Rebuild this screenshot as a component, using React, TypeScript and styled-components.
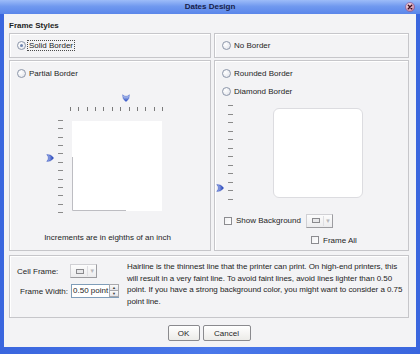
import React from 'react'
import styled, { createGlobalStyle } from 'styled-components'

const GlobalStyle = createGlobalStyle`
  html, body {
    margin: 0;
    padding: 0;
  }
  body {
    width: 420px;
    height: 354px;
    overflow: hidden;
    font-family: 'Liberation Sans', Arial, sans-serif;
    font-size: 8px;
    color: #1e1e1e;
  }
`

const Window = styled.div`
  width: 420px;
  height: 354px;
  display: flex;
  flex-direction: column;
  background: linear-gradient(90deg, #3a66de, #4a78ea 50%, #3a66de);
`

const TitleBar = styled.div`
  height: 14px;
  flex: none;
  display: grid;
  grid-template-columns: 1fr auto 1fr;
  align-items: center;
  background: linear-gradient(#9dbcf8, #7099ef 45%, #5a86ea);
  font-weight: bold;
  color: #16204a;
  line-height: 14px;
`

const TitleText = styled.div`
  grid-column: 2;
`

const CloseButton = styled.div`
  grid-column: 3;
  justify-self: end;
  margin-right: 5px;
  width: 10px;
  height: 10px;
  display: flex;
`

const Frame = styled.div`
  flex: 1;
  margin: 0 4px 7px 4px;
  padding: 0 7px 0 5px;
  background: #f3f3f5;
  display: flex;
  flex-direction: column;
`

const Heading = styled.div`
  font-weight: bold;
  height: 11px;
  line-height: 11px;
  padding-top: 6px;
  margin-bottom: 2px;
`

const StyleGrid = styled.div`
  display: grid;
  grid-template-columns: 202px 195px;
  grid-template-rows: 25px 191px;
  column-gap: 3px;
  row-gap: 2px;
`

const Panel = styled.div`
  box-sizing: border-box;
  border: 1px solid #c6c6ca;
  box-shadow: inset 1px 1px 0 #ffffff;
  background: #f3f3f5;
`

const OptionPanel = styled(Panel)`
  display: flex;
  align-items: center;
  padding-left: 7px;
`

const PreviewPanel = styled(Panel)`
  display: flex;
  flex-direction: column;
`

const RadioRow = styled.label<{ $top: number }>`
  display: flex;
  align-items: center;
  height: 11px;
  margin-top: ${p => p.$top}px;
  padding-left: 7px;
`

const RadioCircle = styled.span<{ $checked?: boolean }>`
  box-sizing: border-box;
  width: 9px;
  height: 9px;
  border-radius: 50%;
  border: 1px solid #8d97aa;
  background: radial-gradient(circle at 35% 35%, #ffffff, #dfe1e8);
  display: flex;
  align-items: center;
  justify-content: center;
  flex: none;
  &::after {
    content: '';
    display: ${p => (p.$checked ? 'block' : 'none')};
    width: 3px;
    height: 3px;
    border-radius: 50%;
    background: #7086b0;
  }
`

const OptionText = styled.span<{ $focused?: boolean }>`
  margin-left: 1px;
  padding: 0 1px;
  line-height: 9px;
  border: 1px dotted ${p => (p.$focused ? '#4a4a4a' : 'transparent')};
`

const Radio = ({ label, checked, focused, top = 0 }: { label: string; checked?: boolean; focused?: boolean; top?: number }) => (
  <RadioRow $top={top}>
    <RadioCircle $checked={checked} />
    <OptionText $focused={focused}>{label}</OptionText>
  </RadioRow>
)

const RulerGrid = styled.div`
  display: grid;
  grid-template-columns: 12px 14px 90px;
  grid-template-rows: 13px 14px 90px;
  margin: 15px 0 0 36px;
`

const HTrack = styled.div`
  grid-column: 3;
  grid-row: 1;
  position: relative;
`

const VTrack = styled.div`
  grid-column: 1;
  grid-row: 3;
  position: relative;
`

const Thumb = styled.div`
  position: absolute;
  width: 8px;
  height: 8px;
  display: flex;
`

const HTicks = styled.div`
  grid-column: 3;
  grid-row: 2;
  display: flex;
  justify-content: space-between;
  align-items: flex-start;
  margin: 0 -1px 0 -2px;
`

const HTick = styled.span`
  width: 1px;
  height: 4px;
  background: #7a7a7a;
`

const VTicks = styled.div`
  grid-column: 2;
  grid-row: 3;
  display: flex;
  flex-direction: column;
  justify-content: space-between;
  margin: -1px 0 -2px 0;
`

const VTick = styled.span`
  width: 5px;
  height: 1px;
  background: #8a8a8a;
`

const Sheet = styled.div`
  grid-column: 3;
  grid-row: 3;
  background: #ffffff;
  display: flex;
`

const RoundSheet = styled.div`
  grid-column: 3;
  grid-row: 1;
  margin-top: 3px;
  width: 90px;
  height: 90px;
  box-sizing: border-box;
  background: #ffffff;
  border: 1px solid #dcdce0;
  border-radius: 6px;
`

const Caption = styled.div`
  margin-top: 21px;
  height: 11px;
  line-height: 11px;
  text-align: center;
  padding-right: 5px;
`

const RoundGrid = styled.div`
  display: grid;
  grid-template-columns: 13px 45px 90px;
  grid-template-rows: 96px;
  margin-top: 8px;
`

const RoundTrack = styled.div`
  grid-column: 1;
  grid-row: 1;
  position: relative;
`

const RoundTicks = styled.div`
  grid-column: 2;
  grid-row: 1;
  display: flex;
  flex-direction: column;
  justify-content: space-between;
  padding: 0 0 1px 0;
`

const OptionsGrid = styled.div`
  display: grid;
  grid-template-columns: 82px auto;
  grid-template-rows: 15px 12px;
  row-gap: 6px;
  margin: 12px 0 0 9px;
  align-items: center;
`

const CheckRow = styled.label<{ $col: number; $row: number }>`
  grid-column: ${p => p.$col};
  grid-row: ${p => p.$row};
  display: flex;
  align-items: center;
  gap: 4px;
  padding-left: ${p => (p.$col === 2 ? 5 : 0)}px;
`

const CheckBox = styled.span`
  box-sizing: border-box;
  width: 8px;
  height: 8px;
  border: 1px solid #8c8c90;
  background: linear-gradient(135deg, #f0f0f2, #ffffff);
`

const ComboBox = styled.div`
  box-sizing: border-box;
  width: 27px;
  height: 14px;
  display: flex;
  align-items: center;
  padding-left: 5px;
  gap: 3px;
  border: 1px solid #d0d0d4;
  border-right-color: #9c9ca0;
  border-bottom-color: #9c9ca0;
  background: linear-gradient(#fcfcfc, #ececee);
`

const Swatch = styled.span`
  box-sizing: border-box;
  width: 8px;
  height: 5px;
  border: 1px solid #8a8a8e;
  background: #e8e8ea;
`

const ComboArrow = styled.span`
  width: 8px;
  height: 10px;
  border-left: 1px solid #dedee2;
  display: flex;
  align-items: center;
  justify-content: center;
  color: #b8b8bc;
  font-size: 6px;
`

const Combo = () => (
  <ComboBox>
    <Swatch />
    <ComboArrow>▼</ComboArrow>
  </ComboBox>
)

const BottomPanel = styled(Panel)`
  margin-top: 4px;
  height: 63px;
  display: flex;
  align-items: flex-start;
`

const FieldCol = styled.div`
  flex: none;
  width: 110px;
  padding: 8px 0 0 7px;
  display: flex;
  flex-direction: column;
  gap: 6px;
`

const FieldRow = styled.div<{ $indent: number; $gap: number }>`
  display: flex;
  align-items: center;
  padding-left: ${p => p.$indent}px;
  gap: ${p => p.$gap}px;
`

const Spinner = styled.div`
  box-sizing: border-box;
  width: 48px;
  height: 14px;
  display: flex;
  border: 1px solid #7f9db9;
  background: #ffffff;
`

const SpinText = styled.span`
  flex: 1;
  padding-left: 1px;
  line-height: 12px;
  white-space: nowrap;
`

const SpinButtons = styled.span`
  width: 9px;
  display: flex;
  flex-direction: column;
`

const SpinButton = styled.span`
  flex: 1;
  display: flex;
  align-items: center;
  justify-content: center;
  border: 1px solid #a8a8ac;
  margin: -1px -1px 0 0;
  background: linear-gradient(#fafafa, #e4e4e8);
  font-size: 4px;
  line-height: 4px;
  color: #404040;
`

const Note = styled.div`
  padding-top: 5px;
  line-height: 11.5px;
  letter-spacing: -0.05px;
`

const NoteLine = styled.div`
  white-space: nowrap;
`

const ButtonRow = styled.div`
  margin-top: 7px;
  display: flex;
  justify-content: center;
  gap: 3px;
`

const Button = styled.button<{ $width: number }>`
  box-sizing: border-box;
  width: ${p => p.$width}px;
  height: 16px;
  padding: 0;
  border: 1px solid #8a8a8e;
  border-radius: 2px;
  background: linear-gradient(#ffffff, #ecebe8);
  font-family: inherit;
  font-size: 8px;
  color: #1e1e1e;
`

const ThumbDown = () => (
  <svg width="8" height="8" viewBox="0 0 8 8">
    <defs>
      <linearGradient id="td" x1="0" y1="0" x2="0" y2="1">
        <stop offset="0" stopColor="#e4ecff" />
        <stop offset="1" stopColor="#1f44c0" />
      </linearGradient>
    </defs>
    <path d="M0.6 0.8 Q4 4 7.4 0.8 Q7.6 5.2 4 7.6 Q0.4 5.2 0.6 0.8 Z" fill="url(#td)" stroke="#3556c4" strokeWidth="0.5" />
  </svg>
)

const ThumbRight = () => (
  <svg width="8" height="8" viewBox="0 0 8 8">
    <defs>
      <linearGradient id="tr" x1="0" y1="0" x2="1" y2="0">
        <stop offset="0" stopColor="#b8c8f8" />
        <stop offset="1" stopColor="#1a3ab4" />
      </linearGradient>
    </defs>
    <path d="M0.8 0.6 Q5.2 0.4 7.6 4 Q5.2 7.6 0.8 7.4 Q4 4 0.8 0.6 Z" fill="url(#tr)" stroke="#2a48b8" strokeWidth="0.5" />
  </svg>
)

const CloseIcon = () => (
  <svg width="10" height="10" viewBox="0 0 10 10">
    <defs>
      <radialGradient id="cg" cx="0.4" cy="0.35" r="0.7">
        <stop offset="0" stopColor="#f8e4ec" />
        <stop offset="1" stopColor="#c27a98" />
      </radialGradient>
    </defs>
    <circle cx="5" cy="5" r="4.6" fill="url(#cg)" stroke="#7d5a9a" strokeWidth="0.6" />
    <path d="M3.3 3.3 L6.7 6.7 M6.7 3.3 L3.3 6.7" stroke="#3a0c1c" strokeWidth="1.4" strokeLinecap="round" />
  </svg>
)

const range = (n: number) => Array.from({ length: n }, (_, i) => i)

const hairline = [
  'Hairline is the thinnest line that the printer can print. On high-end printers, this',
  'will result in a very faint line. To avoid faint lines, avoid lines lighter than 0.50',
  'point. If you have a strong background color, you might want to consider a 0.75',
  'point line.',
]

export default function App() {
  const widthPct = 60
  const heightPct = 40
  const radiusPct = 85
  return (
    <>
      <GlobalStyle />
      <Window>
        <TitleBar>
          <TitleText>Dates Design</TitleText>
          <CloseButton>
            <CloseIcon />
          </CloseButton>
        </TitleBar>
        <Frame>
          <Heading>Frame Styles</Heading>
          <StyleGrid>
            <OptionPanel>
              <RadioCircle $checked />
              <OptionText $focused>Solid Border</OptionText>
            </OptionPanel>
            <OptionPanel>
              <RadioCircle />
              <OptionText>No Border</OptionText>
            </OptionPanel>
            <PreviewPanel>
              <Radio label="Partial Border" top={7} />
              <RulerGrid>
                <HTrack>
                  <Thumb style={{ left: `calc(${widthPct}% - 4px)`, top: 0 }}>
                    <ThumbDown />
                  </Thumb>
                </HTrack>
                <HTicks>
                  {range(12).map(i => (
                    <HTick key={i} />
                  ))}
                </HTicks>
                <VTrack>
                  <Thumb style={{ top: `calc(${heightPct}% - 3px)`, left: 0 }}>
                    <ThumbRight />
                  </Thumb>
                </VTrack>
                <VTicks>
                  {range(12).map(i => (
                    <VTick key={i} />
                  ))}
                </VTicks>
                <Sheet>
                  <svg width="90" height="90" viewBox="0 0 90 90">
                    <path d={`M0.5 ${heightPct * 0.9} V89.5 H${widthPct * 0.9}`} fill="none" stroke="#bdbdc2" strokeWidth="1" />
                  </svg>
                </Sheet>
              </RulerGrid>
              <Caption>Increments are in eighths of an inch</Caption>
            </PreviewPanel>
            <PreviewPanel>
              <Radio label="Rounded Border" top={7} />
              <Radio label="Diamond Border" top={7} />
              <RoundGrid>
                <RoundTrack>
                  <Thumb style={{ top: `calc(${radiusPct}% - 3px)`, left: 1 }}>
                    <ThumbRight />
                  </Thumb>
                </RoundTrack>
                <RoundTicks>
                  {range(12).map(i => (
                    <VTick key={i} />
                  ))}
                </RoundTicks>
                <RoundSheet />
              </RoundGrid>
              <OptionsGrid>
                <CheckRow $col={1} $row={1}>
                  <CheckBox />
                  Show Background
                </CheckRow>
                <Combo />
                <CheckRow $col={2} $row={2}>
                  <CheckBox />
                  Frame All
                </CheckRow>
              </OptionsGrid>
            </PreviewPanel>
          </StyleGrid>
          <BottomPanel>
            <FieldCol>
              <FieldRow $indent={0} $gap={12}>
                Cell Frame:
                <Combo />
              </FieldRow>
              <FieldRow $indent={3} $gap={3}>
                Frame Width:
                <Spinner>
                  <SpinText>0.50 point</SpinText>
                  <SpinButtons>
                    <SpinButton>▲</SpinButton>
                    <SpinButton>▼</SpinButton>
                  </SpinButtons>
                </Spinner>
              </FieldRow>
            </FieldCol>
            <Note>
              {hairline.map(line => (
                <NoteLine key={line}>{line}</NoteLine>
              ))}
            </Note>
          </BottomPanel>
          <ButtonRow>
            <Button $width={32}>OK</Button>
            <Button $width={48}>Cancel</Button>
          </ButtonRow>
        </Frame>
      </Window>
    </>
  )
}
